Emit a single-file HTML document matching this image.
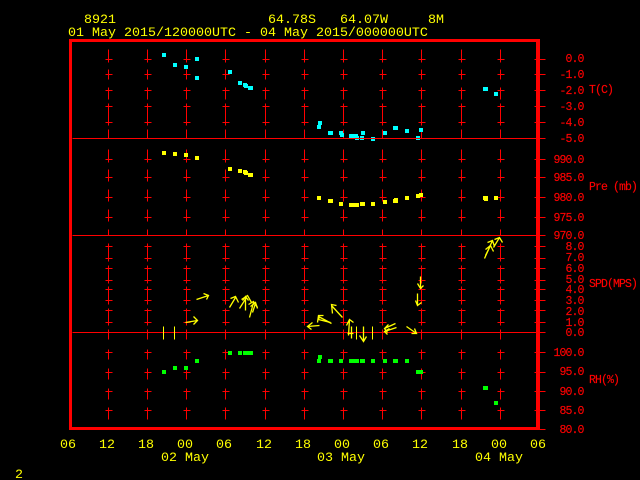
<!DOCTYPE html>
<html>
<head>
<meta charset="utf-8">
<title>8921</title>
<style>
html,body{margin:0;padding:0;background:#000;width:640px;height:480px;overflow:hidden}
svg{display:block;position:absolute;left:0;top:0}
text{font-family:"Liberation Mono",monospace;white-space:pre}
.y{fill:#ff0;font-size:13.33px}
.r{fill:#f00;font-size:11.5px;letter-spacing:-.9px;stroke:#f00;stroke-width:.15}
.n{fill:#f00;font-size:11.5px;letter-spacing:-.9px;text-anchor:end;stroke:#f00;stroke-width:.15}
</style>
</head>
<body>
<svg width="640" height="480" viewBox="0 0 640 480" xmlns="http://www.w3.org/2000/svg">
<rect width="640" height="480" fill="#000"/>
<defs>
<path id="c" fill="none" stroke="#f00" stroke-width="1" shape-rendering="crispEdges" d="M0 49V62M0 69V79M0 87V99M0 103V125M0 129V138M0 149V162M0 169V181M0 189V201M0 209V221M0 229V235M0 243V261M0 265V283M0 286V304M0 308V325M0 329V339M0 349V359M0 368V379M0 388V399M0 407V419M-3 59H4M-3 74H4M-3 90H4M-3 106H4M-3 122H4M-3 159H4M-3 177H4M-3 197H4M-3 217H4M-3 246H4M-3 258H4M-3 268H4M-3 280H4M-3 289H4M-3 300H4M-3 310H4M-3 322H4M-3 352H4M-3 372H4M-3 391H4M-3 410H4"/>
</defs>
<g transform="translate(.5 .5)">
<use href="#c" x="108"/><use href="#c" x="147"/><use href="#c" x="186"/><use href="#c" x="225"/><use href="#c" x="265"/><use href="#c" x="304"/><use href="#c" x="343"/><use href="#c" x="382"/><use href="#c" x="421"/><use href="#c" x="461"/><use href="#c" x="500"/>
</g>
<path fill="#0ff" shape-rendering="crispEdges" d="M162 53h4v4h-4zM195 57h4v4h-4zM173 63h4v4h-4zM184 65h4v4h-4zM195 76h4v4h-4zM228 70h4v4h-4zM238 81h4v4h-4zM243 83h4v4h-4zM244 84h4v4h-4zM248 86h5v4h-5zM318 121h4v4h-4zM317 125h4v4h-4zM328 131h5v4h-5zM339 131h4v4h-4zM340 133h4v4h-4zM349 134h9v4h-9zM355 136h4v4h-4zM360 136h4v4h-4zM361 131h4v4h-4zM371 137h4v4h-4zM383 131h4v4h-4zM393 126h5v4h-5zM405 129h4v4h-4zM419 128h4v4h-4zM416 136h4v4h-4zM483 87h5v4h-5zM494 92h4v4h-4z"/>
<path fill="#ff0" shape-rendering="crispEdges" d="M162 151h4v4h-4zM173 152h4v4h-4zM184 153h4v4h-4zM195 156h4v4h-4zM228 167h4v4h-4zM238 169h4v4h-4zM243 170h4v4h-4zM244 171h4v4h-4zM248 173h5v4h-5zM317 196h4v4h-4zM328 199h5v4h-5zM339 202h4v4h-4zM349 203h10v4h-10zM360 202h5v4h-5zM371 202h4v4h-4zM383 200h4v4h-4zM393 199h5v4h-5zM394 198h4v4h-4zM405 196h4v4h-4zM416 194h4v4h-4zM419 193h4v4h-4zM483 196h5v4h-5zM484 198h4v3h-4zM494 196h4v4h-4z"/>
<path fill="#0f0" shape-rendering="crispEdges" d="M162 370h4v4h-4zM173 366h4v4h-4zM184 366h4v4h-4zM195 359h4v4h-4zM228 351h4v4h-4zM238 351h4v4h-4zM243 351h10v4h-10zM318 355h4v4h-4zM317 359h4v4h-4zM328 359h5v4h-5zM339 359h4v4h-4zM349 359h10v4h-10zM360 359h5v4h-5zM371 359h4v4h-4zM383 359h4v4h-4zM393 359h5v4h-5zM405 359h4v4h-4zM416 370h7v4h-7zM483 386h5v4h-5zM494 401h4v4h-4z"/>
<g fill="#f00" shape-rendering="crispEdges">
<rect x="69" y="39" width="471" height="3"/>
<rect x="69" y="427" width="471" height="3"/>
<rect x="69" y="39" width="3" height="391"/>
<rect x="536" y="39" width="4" height="391"/>
</g>
<g transform="translate(.5 .5)" fill="none" stroke="#f00" shape-rendering="crispEdges">
<path d="M72 138H545M72 235H545M72 332H545M534 59H545M534 74H545M534 90H545M534 106H545M534 122H545M534 159H545M534 177H545M534 197H545M534 217H545M534 246H545M534 258H545M534 268H545M534 280H545M534 289H545M534 300H545M534 310H545M534 322H545M534 352H545M534 372H545M534 391H545M534 410H545M534 429H545"/>
</g>
<g transform="translate(.5 .5)" fill="none" stroke="#ff0" stroke-width="1.3">
<path shape-rendering="crispEdges" stroke-width="1" d="M163 326V339M174 326V339M356 326V339M372 326V339"/>
<path d="M196 299L208 295M203 293L208 295L206 299"/>
<path d="M185 322L197 320M193 316L197 320L193 324"/>
<path d="M229 307L235 297M230 298L235 296L238 302"/>
<path d="M239 308L246 297M241 299L247 295L251 302"/>
<path d="M245 310V297M242 300L245 296L248 300"/>
<path d="M249 317L253 302M248 304L253 301L257 307"/>
<path d="M252 312L255 303M250 306L255 302L257 308"/>
<path d="M420 276V287M417 283L420 288L423 285"/>
<path d="M417 293V304M415 300L417 305L421 302"/>
<path d="M484 258L492 240M487 242L492 240L494 246"/>
<path d="M485 255L490 245M485 249L490 245L493 251"/>
<path d="M493 247L499 237M494 239L499 237L502 242"/>
<path d="M319 325L307 326M312 322L307 326L311 329"/>
<path d="M331 323L318 316M317 322L318 315L323 315"/>
<path d="M330 322L318 319M319 316L318 319"/>
<path d="M342 317L331 305M332 313L331 304L336 305"/>
<path d="M348 335L349 319M346 325L349 319L353 322"/>
<path d="M351 338V326M347 333H353"/>
<path d="M363 326V340M359 335L363 341L366 336"/>
<path d="M395 323L384 328M388 324L384 328L387 332"/>
<path d="M396 327L384 331M387 334L384 331L389 328"/>
<path d="M406 326L416 333M414 328L416 333L411 333"/>
</g>
<text class="y" x="84" y="23">8921</text>
<text class="y" x="268" y="23">64.78S</text>
<text class="y" x="340" y="23">64.07W</text>
<text class="y" x="428" y="23">8M</text>
<text class="y" x="68" y="36">01 May 2015/120000UTC - 04 May 2015/000000UTC</text>
<g>
<text class="y" x="60" y="448">06</text><text class="y" x="99" y="448">12</text><text class="y" x="138" y="448">18</text><text class="y" x="177" y="448">00</text><text class="y" x="216" y="448">06</text><text class="y" x="256" y="448">12</text><text class="y" x="295" y="448">18</text><text class="y" x="334" y="448">00</text><text class="y" x="373" y="448">06</text><text class="y" x="412" y="448">12</text><text class="y" x="452" y="448">18</text><text class="y" x="491" y="448">00</text><text class="y" x="530" y="448">06</text>
<text class="y" x="161" y="461">02 May</text><text class="y" x="317" y="461">03 May</text><text class="y" x="475" y="461">04 May</text>
<text class="y" x="15" y="478">2</text>
</g>
<g>
<text class="n" x="583.5" y="62">0.0</text><text class="n" x="583.5" y="78">-1.0</text><text class="n" x="583.5" y="94">-2.0</text><text class="n" x="583.5" y="110">-3.0</text><text class="n" x="583.5" y="126">-4.0</text><text class="n" x="583.5" y="142">-5.0</text>
<text class="n" x="583.5" y="163">990.0</text><text class="n" x="583.5" y="181">985.0</text><text class="n" x="583.5" y="201">980.0</text><text class="n" x="583.5" y="221">975.0</text><text class="n" x="583.5" y="239">970.0</text>
<text class="n" x="583.5" y="250">8.0</text><text class="n" x="583.5" y="261">7.0</text><text class="n" x="583.5" y="272">6.0</text><text class="n" x="583.5" y="283">5.0</text><text class="n" x="583.5" y="293">4.0</text><text class="n" x="583.5" y="304">3.0</text><text class="n" x="583.5" y="315">2.0</text><text class="n" x="583.5" y="326">1.0</text><text class="n" x="583.5" y="336">0.0</text>
<text class="n" x="583.5" y="356">100.0</text><text class="n" x="583.5" y="375">95.0</text><text class="n" x="583.5" y="395">90.0</text><text class="n" x="583.5" y="414">85.0</text><text class="n" x="583.5" y="433">80.0</text>
<text class="r" x="589" y="93">T(C)</text>
<text class="r" x="589" y="190">Pre (mb)</text>
<text class="r" x="589" y="287">SPD(MPS)</text>
<text class="r" x="589" y="383">RH(%)</text>
</g>
</svg>
</body>
</html>
